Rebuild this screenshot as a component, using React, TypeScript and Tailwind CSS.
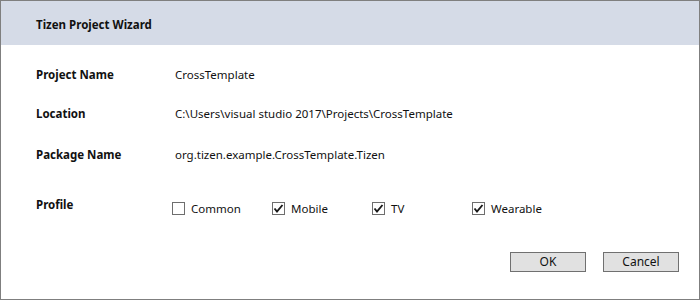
import React from 'react';

const font = { fontFamily: '"Noto Sans", "Open Sans", sans-serif' };

const fields = [
  { label: 'Project Name', value: 'CrossTemplate', mt: 'mt-[20px]' },
  { label: 'Location', value: 'C:\\Users\\visual studio 2017\\Projects\\CrossTemplate', mt: 'mt-[19px]' },
  { label: 'Package Name', value: 'org.tizen.example.CrossTemplate.Tizen', mt: 'mt-[21px]' },
];

const profiles = [
  { name: 'Common', checked: false },
  { name: 'Mobile', checked: true },
  { name: 'TV', checked: true },
  { name: 'Wearable', checked: true },
];

const CheckBox = ({ checked }: { checked: boolean }) => (
  <span className="w-[13px] h-[13px] border border-[#6e6e6e] bg-white flex items-center justify-center">
    {checked && (
      <svg width="11" height="11" viewBox="0 0 11 11">
        <polyline points="1.5,5.5 4,8.5 9.5,2" fill="none" stroke="#1a1a1a" strokeWidth="1.9" />
      </svg>
    )}
  </span>
);

const App = () => {
  return (
    <div className="w-[700px] h-[300px] border border-[#7f7f7f] bg-white text-[11.5px] text-[#111] flex flex-col" style={font}>
      <div className="h-[44px] bg-[#d5dbe7] flex items-center pl-[35px] pt-[3px] font-bold text-[11.5px]">Tizen Project Wizard</div>

      <div className="flex flex-col pl-[35px]">
        {fields.map((f) => (
          <div key={f.label} className={`${f.mt} h-[20px] flex items-center`}>
            <span className="w-[139px] font-bold">{f.label}</span>
            <span>{f.value}</span>
          </div>
        ))}

        <div className="mt-[30px] h-[20px] flex items-center">
          <span className="w-[136px] font-bold">Profile</span>
          {profiles.map((p) => (
            <div key={p.name} className="w-[100px] flex items-center gap-[6px] mt-[7px]">
              <CheckBox checked={p.checked} />
              <span>{p.name}</span>
            </div>
          ))}
        </div>
      </div>

      <div className="mt-[37px] flex justify-end gap-[17px] pr-[20px]">
        <button className="w-[76px] h-[20px] bg-[#e1e1e1] border border-[#707070] text-[12px]">OK</button>
        <button className="w-[76px] h-[20px] bg-[#e1e1e1] border border-[#707070] text-[12px]">Cancel</button>
      </div>
    </div>
  );
};

export default App;
